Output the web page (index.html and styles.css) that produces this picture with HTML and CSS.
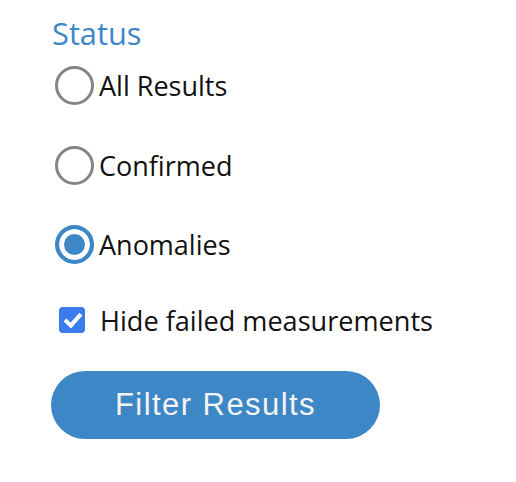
FILE: index.html
```html
<!DOCTYPE html>
<html>
<head>
<meta charset="utf-8">
<link rel="stylesheet" href="styles.css">
</head>
<body>
<form class="panel">
  <div class="title">Status</div>
  <label class="radio-row r1"><input type="radio" name="status" class="radio"><span>All Results</span></label>
  <label class="radio-row r2"><input type="radio" name="status" class="radio"><span>Confirmed</span></label>
  <label class="radio-row r3"><input type="radio" name="status" class="radio" checked><span>Anomalies</span></label>
  <label class="check-row"><input type="checkbox" class="check" checked><span>Hide failed measurements</span></label>
  <button type="button" class="btn">Filter Results</button>
</form>
</body>
</html>
```
FILE: styles.css
```css
html, body {
  margin: 0;
  padding: 0;
  background: #ffffff;
}
.panel {
  display: flex;
  flex-direction: column;
  align-items: flex-start;
  padding: 15px 0 0 51px;
  font-family: "Open Sans", "Noto Sans", sans-serif;
  color: #111111;
}
.title {
  font-size: 30.8px;
  line-height: 36px;
  color: #3d87c6;
  margin-left: 1px;
}
.radio-row {
  display: flex;
  align-items: center;
  height: 40px;
  font-size: 27px;
  gap: 5px;
  margin-left: 4px;
}
.r1 { margin-top: 14px; }
.r2 { margin-top: 40px; }
.r3 { margin-top: 39px; }
.radio {
  appearance: none;
  -webkit-appearance: none;
  margin: 0;
  width: 39px;
  height: 39px;
  box-sizing: border-box;
  border: 3.5px solid #858585;
  border-radius: 50%;
  background: #fff;
}
.radio:checked {
  border: 4px solid #3d87c6;
  background: #3d87c6;
  box-shadow: inset 0 0 0 5px #fff;
}
.check-row {
  display: flex;
  align-items: center;
  height: 40px;
  margin-top: 36px;
  margin-left: 8px;
  gap: 15px;
  font-size: 27.1px;
}
.check {
  appearance: none;
  -webkit-appearance: none;
  margin: 0;
  width: 26px;
  height: 26px;
  border-radius: 4px;
  background: #3a7bf0;
  position: relative;
}
.check::after {
  content: "";
  position: absolute;
  left: 9px;
  top: 3px;
  width: 6px;
  height: 13px;
  border: solid #fff;
  border-width: 0 4px 4px 0;
  transform: rotate(42deg);
}
.btn {
  margin-top: 31px;
  width: 329px;
  height: 68px;
  border: none;
  border-radius: 34px;
  background: #3d87c6;
  color: #f4f4f4;
  font-family: "Liberation Sans", Arial, sans-serif;
  font-size: 31px;
  letter-spacing: 1.45px;
  padding: 0;
}
```
